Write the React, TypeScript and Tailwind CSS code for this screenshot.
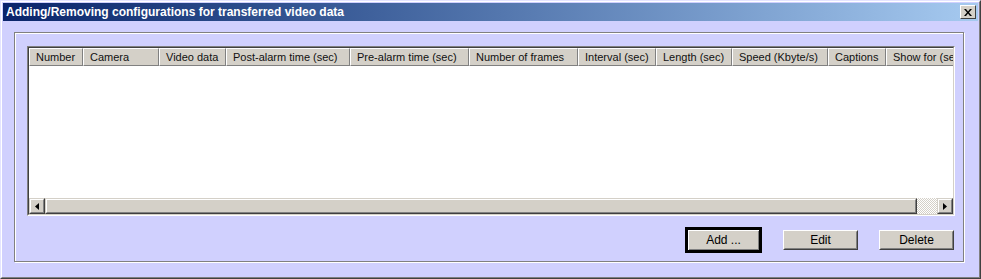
import React from "react";

const columns = [
  { label: "Number", w: 54 },
  { label: "Camera", w: 76 },
  { label: "Video data", w: 67 },
  { label: "Post-alarm time (sec)", w: 124 },
  { label: "Pre-alarm time (sec)", w: 119 },
  { label: "Number of frames", w: 109 },
  { label: "Interval (sec)", w: 78 },
  { label: "Length (sec)", w: 76 },
  { label: "Speed (Kbyte/s)", w: 96 },
  { label: "Captions", w: 58 },
  { label: "Show for (sec)", w: 90 },
];

function Arrow({ dir }: { dir: "left" | "right" }) {
  return (
    <svg width="4" height="7" viewBox="0 0 4 7" className="block">
      {dir === "left" ? (
        <polygon points="4,0 4,7 0,3.5" fill="#000" />
      ) : (
        <polygon points="0,0 0,7 4,3.5" fill="#000" />
      )}
    </svg>
  );
}

function ScrollButton({ dir }: { dir: "left" | "right" }) {
  return (
    <div className="w-[16px] h-[16px] shrink-0 bg-[#d4d0c8] border border-t-[#d4d0c8] border-l-[#d4d0c8] border-r-[#404040] border-b-[#404040]">
      <div className="w-full h-full flex items-center justify-center border border-t-white border-l-white border-r-[#808080] border-b-[#808080]">
        <Arrow dir={dir} />
      </div>
    </div>
  );
}

function Button({ label }: { label: string }) {
  return (
    <div className="w-[75px] h-[20px] bg-[#d4d0c8] border border-t-white border-l-white border-r-[#404040] border-b-[#404040]">
      <div className="w-full h-full flex items-center justify-center border border-t-[#d4d0c8] border-l-[#d4d0c8] border-r-[#808080] border-b-[#808080] text-[12px] text-black">
        {label}
      </div>
    </div>
  );
}

export default function App() {
  return (
    <div className="w-[981px] h-[279px] bg-[#d0d0fe] border border-t-[#e4e4ff] border-l-[#e4e4ff] border-r-[#404040] border-b-[#404040] font-['Liberation_Sans',Arial,sans-serif]">
      <div className="w-full h-full flex flex-col border border-t-white border-l-white border-r-[#808080] border-b-[#808080]">
        {/* Title bar */}
        <div className="mx-[1px] mt-[1px] h-[18px] flex items-center justify-between bg-gradient-to-r from-[#0a246a] to-[#a6caf0] pl-[3px] pr-[2px]">
          <span className="text-white font-bold text-[12px] leading-none">
            Adding/Removing configurations for transferred video data
          </span>
          <div className="w-[16px] h-[14px] bg-[#d4d0c8] border border-t-white border-l-white border-r-[#404040] border-b-[#404040] flex items-center justify-center">
            <svg width="8" height="7" viewBox="0 0 8 7" className="block">
              <path d="M0 0h2l2 2.5L6 0h2L5 3.5 8 7H6L4 4.5 2 7H0l3-3.5z" fill="#000" />
            </svg>
          </div>
        </div>

        {/* Body */}
        <div className="flex-1 pl-[12px] pr-[15px] pt-[11px] pb-[15px]">
          <div className="h-full flex flex-col border border-[#808080] shadow-[inset_1px_1px_0_#fff,1px_1px_0_#fff] pl-[12px] pr-[8px] pt-[13px]">
            {/* List view */}
            <div className="w-[928px] h-[170px] flex flex-col border border-t-[#808080] border-l-[#808080] border-r-white border-b-white">
              <div className="flex-1 flex flex-col bg-white border border-t-[#404040] border-l-[#404040] border-r-[#d4d0c8] border-b-[#d4d0c8] overflow-hidden">
                <div className="flex h-[18px] shrink-0 overflow-hidden">
                  {columns.map((c) => (
                    <div
                      key={c.label}
                      style={{ width: c.w }}
                      className="shrink-0 h-full bg-[#d4d0c8] border border-t-white border-l-white border-r-[#808080] border-b-[#808080] flex items-center pl-[6px] text-[11px] text-[#111] whitespace-nowrap overflow-hidden"
                    >
                      {c.label}
                    </div>
                  ))}
                </div>
                <div className="flex-1" />
                {/* Horizontal scrollbar */}
                <div className="flex h-[16px] shrink-0">
                  <ScrollButton dir="left" />
                  <div className="w-[872px] h-[16px] shrink-0 bg-[#d4d0c8] border border-t-[#d4d0c8] border-l-[#d4d0c8] border-r-[#404040] border-b-[#404040]">
                    <div className="w-full h-full border border-t-white border-l-white border-r-[#808080] border-b-[#808080]" />
                  </div>
                  <div className="flex-1 h-[16px] bg-[repeating-conic-gradient(#d4d0c8_0_25%,#ffffff_0_50%)] bg-size-[2px_2px]" />
                  <ScrollButton dir="right" />
                </div>
              </div>
            </div>

            {/* Buttons */}
            <div className="flex justify-end items-center mt-[11px] pr-[1px]">
              <div className="w-[77px] h-[26px] border-[3px] border-black bg-[#d4d0c8] flex items-center justify-center text-[12px] text-black shadow-[inset_1px_1px_0_#fff,inset_-1px_-1px_0_#808080]">
                Add ...
              </div>
              <div className="ml-[21px]">
                <Button label="Edit" />
              </div>
              <div className="ml-[21px]">
                <Button label="Delete" />
              </div>
            </div>
          </div>
        </div>
      </div>
    </div>
  );
}
